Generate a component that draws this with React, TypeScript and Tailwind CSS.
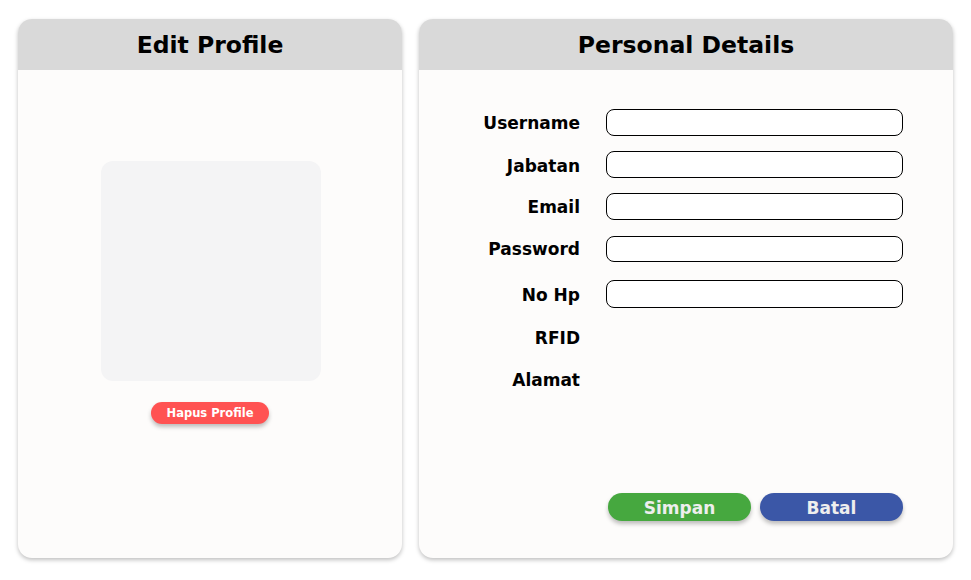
import React from "react";

const fields = [
  { label: "Username", input: true, mt: "mt-[39px]", h: "h-[27px]", lp: "pt-[2px]" },
  { label: "Jabatan", input: true, mt: "mt-[15px]", h: "h-[27px]", lp: "pt-[4px]" },
  { label: "Email", input: true, mt: "mt-[15px]", h: "h-[27px]", lp: "pt-[2px]" },
  { label: "Password", input: true, mt: "mt-[16px]", h: "h-[26px]", lp: "pt-0" },
  { label: "No Hp", input: true, mt: "mt-[18px]", h: "h-[28px]", lp: "pt-[2px]" },
  { label: "RFID", input: false, mt: "mt-[16px]", h: "h-[27px]", lp: "pt-[2px]" },
  { label: "Alamat", input: false, mt: "mt-[15px]", h: "h-[27px]", lp: "pt-[2px]" },
];

const App = () => {
  return (
    <div className="w-[971px] h-[580px] bg-white flex gap-[17px] pl-[18px] pt-[19px] font-['DejaVu_Sans',sans-serif] text-black">
      {/* Edit Profile card */}
      <div className="w-[384px] h-[539px] rounded-[14px] bg-[#fdfcfb] shadow-[0_2px_4px_rgba(0,0,0,0.25)] overflow-hidden flex flex-col">
        <div className="h-[51px] bg-[#d9d9d9] flex items-center justify-center pt-[3px]">
          <h1 className="text-[23.5px] font-bold leading-none">Edit Profile</h1>
        </div>
        <div className="flex flex-col items-center">
          <div className="mt-[91px] ml-[2px] w-[220px] h-[220px] rounded-[12px] bg-[#f4f4f5]"></div>
          <button className="mt-[21px] w-[118px] h-[22px] pt-[2px] rounded-full bg-[#ff5252] text-white text-[11.5px] font-bold leading-none shadow-[0_3px_4px_rgba(0,0,0,0.25)]">
            Hapus Profile
          </button>
        </div>
      </div>

      {/* Personal Details card */}
      <div className="w-[534px] h-[539px] rounded-[14px] bg-[#fdfcfb] shadow-[0_2px_4px_rgba(0,0,0,0.25)] overflow-hidden flex flex-col">
        <div className="h-[51px] bg-[#d9d9d9] flex items-center justify-center pt-[3px]">
          <h2 className="text-[23.5px] font-bold leading-none">Personal Details</h2>
        </div>
        <div className="flex flex-col flex-1">
          {fields.map((f) => (
            <div key={f.label} className={`flex items-center ${f.mt} ${f.h}`}>
              <label className={`w-[161px] ${f.lp} text-right text-[17px] font-bold leading-none`}>{f.label}</label>
              {f.input && (
                <input
                  type="text"
                  className={`ml-[26px] w-[297px] ${f.h} rounded-[8px] border border-black bg-white outline-none px-2`}
                />
              )}
            </div>
          ))}
          <div className="mt-auto mb-[37px] flex gap-[9px] pl-[189px]">
            <button className="w-[143px] h-[28px] pt-[3px] rounded-full bg-[#46a83f] text-[#eeeeee] text-[17px] font-bold leading-none shadow-[0_3px_4px_rgba(0,0,0,0.25)]">
              Simpan
            </button>
            <button className="w-[143px] h-[28px] pt-[3px] rounded-full bg-[#3b57a7] text-[#eeeeee] text-[17px] font-bold leading-none shadow-[0_3px_4px_rgba(0,0,0,0.25)]">
              Batal
            </button>
          </div>
        </div>
      </div>
    </div>
  );
};

export default App;
